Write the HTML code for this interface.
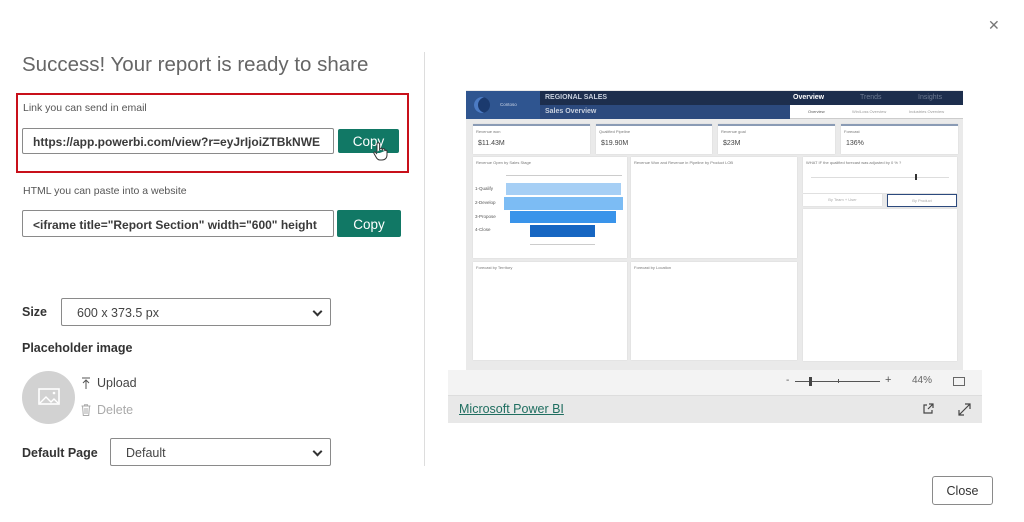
<!DOCTYPE html>
<html><head><style>
*{box-sizing:border-box;margin:0;padding:0}
body{width:1024px;height:522px;background:#fff;font-family:"Liberation Sans",sans-serif;position:relative;overflow:hidden;color:#333}
.a{position:absolute}
.inp{position:absolute;border:1px solid #8a8a8a;border-radius:2px;font-size:12px;font-weight:bold;color:#3a3a3a;padding:6px 0 0 10px;white-space:nowrap;overflow:hidden;background:#fff}
.btn{position:absolute;background:#117865;color:#fff;font-size:13.5px;text-align:center;border-radius:2px}
.sel{position:absolute;border:1px solid #8a8a8a;border-radius:2px;font-size:12.5px;color:#444;padding:7px 0 0 15px;background:#fff}
.sel:after{content:"";position:absolute;right:9px;top:9px;width:5px;height:5px;border-right:2px solid #333;border-bottom:2px solid #333;transform:rotate(45deg)}
.lbl{position:absolute;font-size:12.5px;font-weight:bold;color:#333}
.card{position:absolute;background:#fff;box-shadow:0 0 1px #ccc}
.kp{border-top:2px solid #8a9bb5}
.t{font-size:4px;color:#777;position:absolute;left:3px;top:3px;white-space:nowrap}
.v{font-size:7px;color:#444;position:absolute;left:5px;top:14px}
</style></head><body>
<div class="a" style="left:988px;top:17px;font-size:14px;color:#777">✕</div>
<div class="a" style="left:22px;top:53px;font-size:20.5px;color:#666;font-weight:300">Success! Your report is ready to share</div>
<div class="a" style="left:16px;top:93px;width:393px;height:80px;border:2px solid #c8101a"></div>
<div class="a" style="left:23px;top:102px;font-size:10.5px;color:#555">Link you can send in email</div>
<div class="inp" style="left:22px;top:128px;width:312px;height:26px">https://app.powerbi.com/view?r=eyJrIjoiZTBkNWE</div>
<div class="btn" style="left:338px;top:129px;width:61px;height:24px;padding-top:5px">Copy</div>
<svg class="a" style="left:372px;top:141px" width="16" height="20" viewBox="0 0 16 20"><path d="M5 11V3a1.3 1.3 0 012.6 0v6 M7.6 8.5a1.3 1.3 0 012.6 0v1 M10.2 9a1.3 1.3 0 012.6 0v1 M12.8 10a1.2 1.2 0 012.2 0v4c0 3-2 5-5 5H8c-2 0-3-1-4-3L2 12.5c-.6-1 .6-2 1.5-1.2L5 13" fill="#fff" stroke="#333" stroke-width="1"/></svg>
<div class="a" style="left:23px;top:185px;font-size:10.5px;color:#555">HTML you can paste into a website</div>
<div class="inp" style="left:22px;top:210px;width:312px;height:27px;padding-top:7px">&lt;iframe title="Report Section" width="600" height</div>
<div class="btn" style="left:337px;top:210px;width:64px;height:27px;padding-top:7px">Copy</div>
<div class="lbl" style="left:22px;top:305px">Size</div>
<div class="sel" style="left:61px;top:298px;width:270px;height:28px">600 x 373.5 px</div>
<div class="lbl" style="left:22px;top:341px">Placeholder image</div>
<div class="a" style="left:22px;top:371px;width:53px;height:53px;border-radius:50%;background:#d2d2d2"></div>
<svg class="a" style="left:38px;top:388px" width="22" height="18" viewBox="0 0 22 18"><rect x="1" y="1" width="20" height="15" fill="none" stroke="#fff" stroke-width="1.6"/><path d="M2 15l6-6 5 5 3-3 4 4" fill="none" stroke="#fff" stroke-width="1.4"/><circle cx="16" cy="5" r="1.3" fill="#fff"/></svg>
<svg class="a" style="left:81px;top:377px" width="10" height="12" viewBox="0 0 10 12"><path d="M1 1h8M5 3v9M2 6l3-3 3 3" fill="none" stroke="#555" stroke-width="1"/></svg>
<div class="a" style="left:97px;top:376px;font-size:12.5px;color:#444">Upload</div>
<svg class="a" style="left:81px;top:404px" width="10" height="12" viewBox="0 0 10 12"><path d="M0.5 2h9M3.5 2V0.8h3V2M1.5 2l.8 9.5h5.4L8.5 2M4 4v6M6 4v6" fill="none" stroke="#aaa" stroke-width="1"/></svg>
<div class="a" style="left:97px;top:403px;font-size:12.5px;color:#aaa">Delete</div>
<div class="lbl" style="left:22px;top:446px">Default Page</div>
<div class="sel" style="left:110px;top:438px;width:221px;height:28px">Default</div>
<div class="a" style="left:424px;top:52px;width:1px;height:414px;background:#ddd"></div>

<div class="a" style="left:466px;top:90px;width:497px;height:280px;background:#eaeaea"></div>
<div class="a" style="left:466px;top:91px;width:74px;height:28px;background:#2f5590"></div>
<div class="a" style="left:474px;top:97px;width:16px;height:16px;border-radius:50%;background:#1b3a6e;box-shadow:inset 4px 0 0 #4c7bc4"></div>
<div class="a" style="left:500px;top:102px;font-size:4.5px;color:#cfd8e8">Contoso</div>
<div class="a" style="left:540px;top:91px;width:423px;height:14px;background:#1d2e4d"></div>
<div class="a" style="left:540px;top:105px;width:250px;height:14px;background:#2c4a7e"></div>
<div class="a" style="left:790px;top:105px;width:173px;height:14px;background:#fff;border-bottom:1px solid #ccc"></div>
<div class="a" style="left:545px;top:94px;font-size:7px;font-weight:bold;color:#c8d0de">REGIONAL SALES</div>
<div class="a" style="left:545px;top:108px;font-size:7px;font-weight:bold;color:#c8d0de">Sales Overview</div>
<div class="a" style="left:793px;top:94px;font-size:7px;font-weight:bold;color:#fff">Overview</div>
<div class="a" style="left:860px;top:94px;font-size:7px;color:#6d7a92">Trends</div>
<div class="a" style="left:918px;top:94px;font-size:7px;color:#6d7a92">Insights</div>
<div class="a" style="left:808px;top:109px;font-size:4px;color:#555">Overview</div>
<div class="a" style="left:852px;top:109px;font-size:4px;color:#999">Win/Loss Overview</div>
<div class="a" style="left:909px;top:109px;font-size:4px;color:#999">Industries Overview</div>

<div class="card kp" style="left:473px;top:124px;width:117px;height:30px"><span class="t">Revenue won</span><span class="v">$11.43M</span></div>
<div class="card kp" style="left:596px;top:124px;width:116px;height:30px"><span class="t">Qualified Pipeline</span><span class="v">$19.90M</span></div>
<div class="card kp" style="left:718px;top:124px;width:117px;height:30px"><span class="t">Revenue goal</span><span class="v">$23M</span></div>
<div class="card kp" style="left:841px;top:124px;width:117px;height:30px"><span class="t">Forecast</span><span class="v">136%</span></div>

<div class="card" style="left:473px;top:157px;width:154px;height:101px"><span class="t">Revenue Open by Sales Stage</span>
<div class="a" style="left:33px;top:18px;width:116px;height:1px;background:#ccc"></div>
<div class="a" style="left:2px;top:29px;font-size:4.5px;color:#555">1-Qualify</div>
<div class="a" style="left:2px;top:43px;font-size:4.5px;color:#555">2-Develop</div>
<div class="a" style="left:2px;top:57px;font-size:4.5px;color:#555">3-Propose</div>
<div class="a" style="left:2px;top:70px;font-size:4.5px;color:#555">4-Close</div>
<div class="a" style="left:33px;top:26px;width:115px;height:12px;background:#a6cff5"></div>
<div class="a" style="left:31px;top:40px;width:119px;height:13px;background:#7cbcf4"></div>
<div class="a" style="left:37px;top:54px;width:106px;height:12px;background:#3a94ea"></div>
<div class="a" style="left:57px;top:68px;width:65px;height:12px;background:#1766c2"></div>
<div class="a" style="left:57px;top:87px;width:65px;height:1px;background:#ccc"></div></div>
<div class="card" style="left:631px;top:157px;width:166px;height:101px"><span class="t">Revenue Won and Revenue in Pipeline by Product LOB</span></div>
<div class="card" style="left:803px;top:157px;width:154px;height:36px"><span class="t">WHAT IF the qualified forecast was adjusted by 0 % ?</span>
<div class="a" style="left:8px;top:20px;width:138px;height:1px;background:#ddd"></div>
<div class="a" style="left:112px;top:17px;width:2px;height:6px;background:#333"></div></div>
<div class="card" style="left:803px;top:194px;width:79px;height:12px;font-size:4px;color:#aaa;text-align:center;padding-top:3px">By Team + User</div>
<div class="card" style="left:887px;top:194px;width:70px;height:13px;border:1px solid #2c4a7e;font-size:4px;color:#aaa;text-align:center;padding-top:3px">By Product</div>
<div class="card" style="left:803px;top:209px;width:154px;height:152px"></div>
<div class="card" style="left:473px;top:262px;width:154px;height:98px"><span class="t">Forecast by Territory</span></div>
<div class="card" style="left:631px;top:262px;width:166px;height:98px"><span class="t">Forecast by Location</span></div>

<div class="a" style="left:448px;top:370px;width:534px;height:26px;background:#f3f3f3;border-bottom:1px solid #ddd"></div>
<div class="a" style="left:786px;top:375px;font-size:10px;color:#555">-</div>
<div class="a" style="left:795px;top:381px;width:85px;height:1px;background:#555"></div>
<div class="a" style="left:809px;top:377px;width:3px;height:9px;background:#444"></div>
<div class="a" style="left:838px;top:379px;width:1px;height:4px;background:#555"></div>
<div class="a" style="left:885px;top:374px;font-size:11px;color:#555">+</div>
<div class="a" style="left:912px;top:375px;font-size:10px;color:#666">44%</div>
<div class="a" style="left:953px;top:377px;width:12px;height:9px;border:1px solid #666"></div>
<div class="a" style="left:448px;top:396px;width:534px;height:27px;background:#e8e8e8"></div>
<div class="a" style="left:459px;top:402px;font-size:12.5px;color:#1f6e60;text-decoration:underline">Microsoft Power BI</div>
<svg class="a" style="left:922px;top:402px" width="13" height="13" viewBox="0 0 13 13"><path d="M5 3H2v8h8V8M7 2h4v4M11 2L6 7" fill="none" stroke="#444" stroke-width="1.2"/></svg>
<svg class="a" style="left:958px;top:403px" width="13" height="13" viewBox="0 0 13 13"><path d="M1 12L12 1M7 1h5v5M1 7v5h5" fill="none" stroke="#444" stroke-width="1.2"/></svg>
<div class="a" style="left:932px;top:476px;width:61px;height:29px;border:1px solid #8a8a8a;border-radius:3px;font-size:12.5px;color:#333;text-align:center;padding-top:7px">Close</div>
</body></html>
